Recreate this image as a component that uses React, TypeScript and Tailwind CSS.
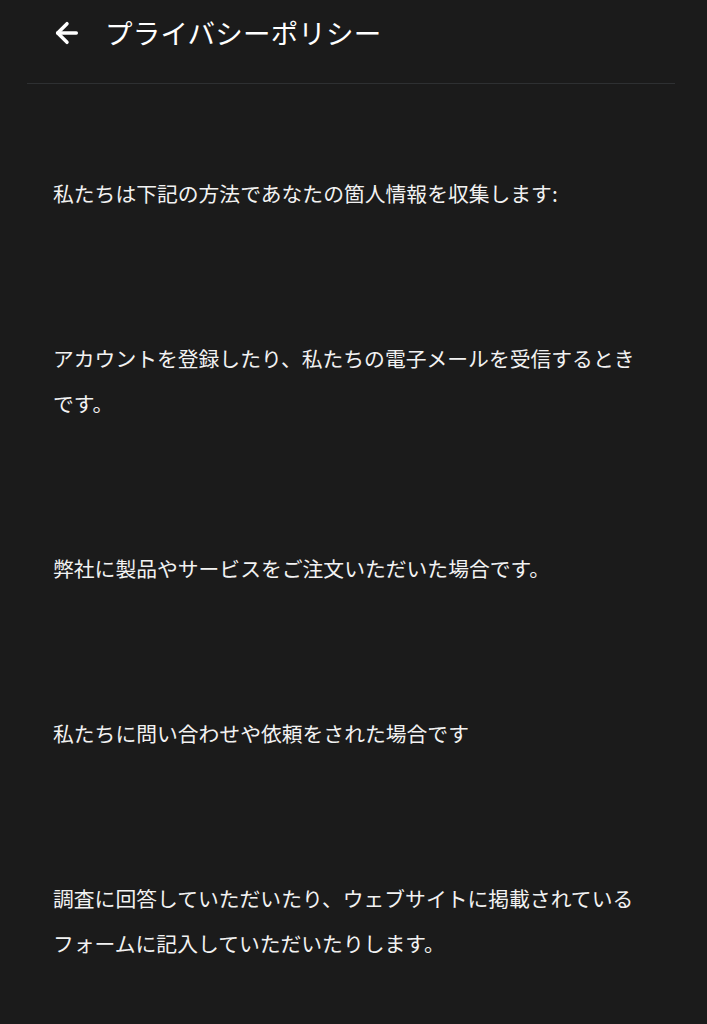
import { ArrowLeft } from 'lucide-react';

const paragraphs = [
  '私たちは下記の方法であなたの箇人情報を収集します:',
  'アカウントを登録したり、私たちの電子メールを受信するときです。',
  '弊社に製品やサービスをご注文いただいた場合です。',
  '私たちに問い合わせや依頼をされた場合です',
  '調査に回答していただいたり、ウェブサイトに掲載されているフォームに記入していただいたりします。',
];

export default function App() {
  return (
    <div
      className="min-h-screen w-full bg-[#1b1b1b] text-white"
      style={{ fontFamily: '"Noto Sans CJK JP", "Noto Sans", sans-serif' }}
    >
      <header className="ml-[27px] mr-[32px] flex h-[84px] items-center gap-[22px] border-b border-[#2e3032] pb-[18px] pl-[24px]">
        <ArrowLeft className="h-[32px] w-[32px]" strokeWidth={2.6} />
        <h1 className="text-[27.5px] leading-none font-normal tracking-[0.2px]">プライバシーポリシー</h1>
      </header>

      <main className="flex flex-col gap-[120px] pt-[87px] pl-[53px] pr-[60px]">
        {paragraphs.map((p) => (
          <p key={p} className="text-[20.8px] leading-[45px] text-[#f2f2f2]">
            {p}
          </p>
        ))}
      </main>
    </div>
  );
}
